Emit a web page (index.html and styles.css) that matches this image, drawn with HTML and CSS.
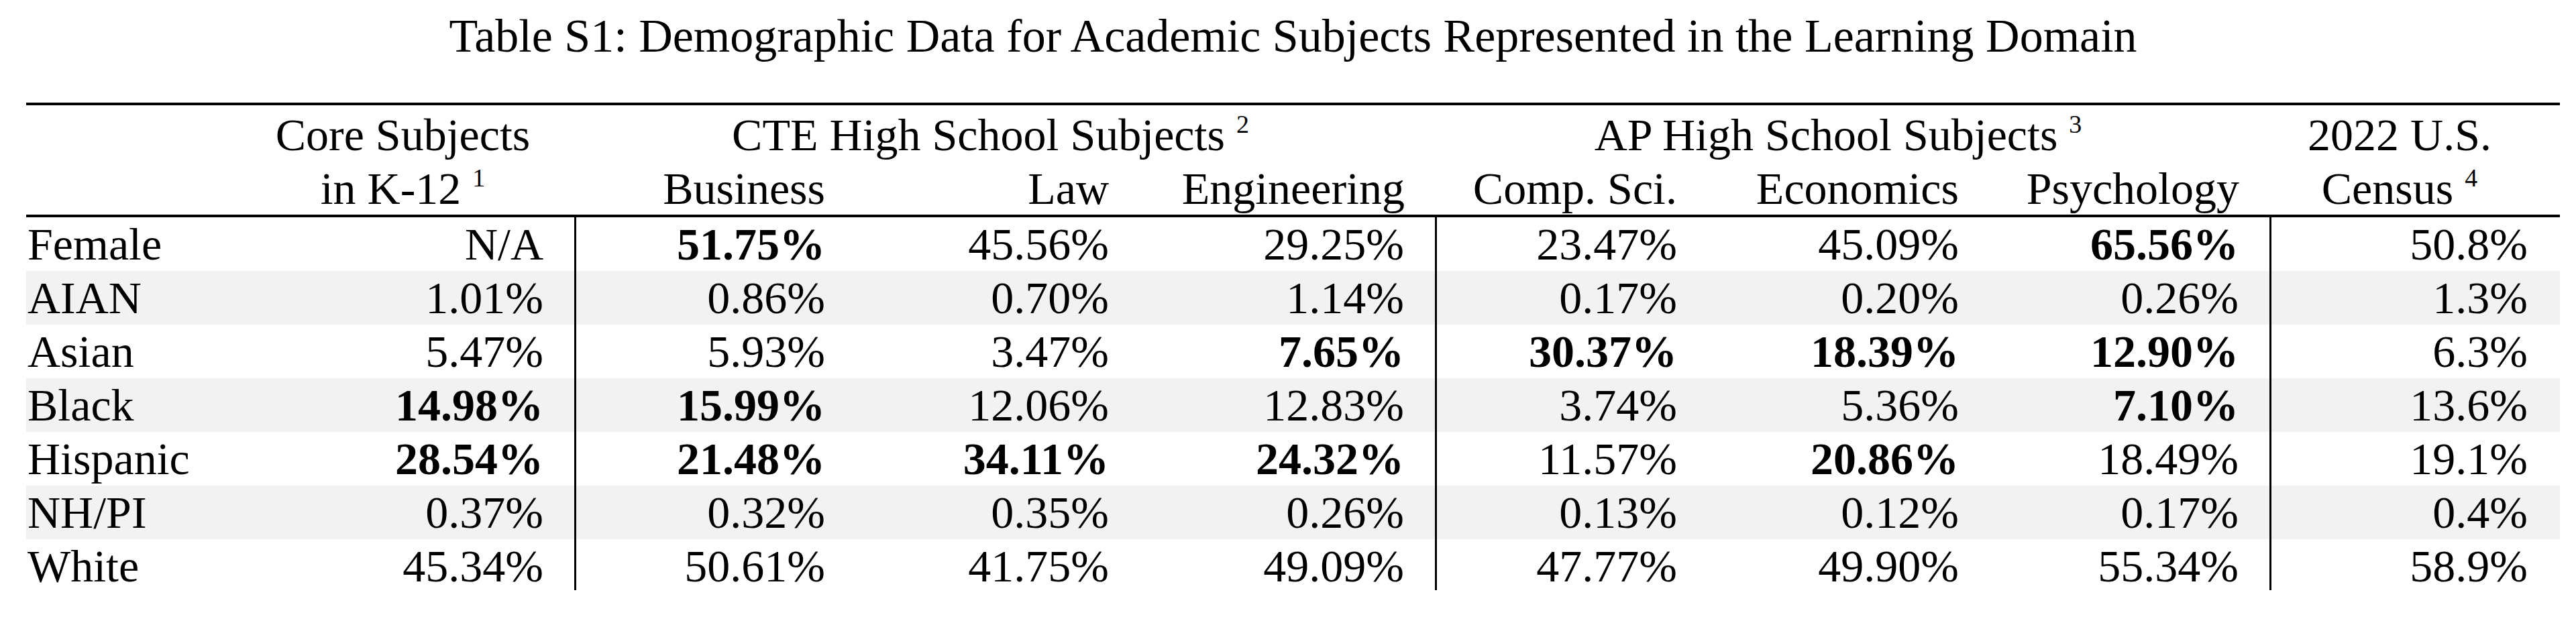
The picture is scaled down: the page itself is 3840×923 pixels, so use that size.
FILE: index.html
```html
<!DOCTYPE html>
<html lang="en">
<head>
<meta charset="utf-8">
<title>Table S1</title>
<link rel="stylesheet" href="styles.css">
</head>
<body>
<div class="page">
  <h1 class="caption">Table S1: Demographic Data for Academic Subjects Represented in the Learning Domain</h1>
  <div class="table">
    <div class="head">
      <div class="hrow hrow-top">
        <div class="cell"></div>
        <div class="cell center">Core Subjects</div>
        <div class="cell center span3">CTE High School Subjects <sup class="note">2</sup></div>
        <div class="cell center span3">AP High School Subjects <sup class="note">3</sup></div>
        <div class="cell center">2022 U.S.</div>
      </div>
      <div class="hrow hrow-sub">
        <div class="cell"></div>
        <div class="cell center">in K-12 <sup class="note">1</sup></div>
        <div class="cell">Business</div>
        <div class="cell">Law</div>
        <div class="cell">Engineering</div>
        <div class="cell">Comp. Sci.</div>
        <div class="cell">Economics</div>
        <div class="cell">Psychology</div>
        <div class="cell center">Census <sup class="note">4</sup></div>
      </div>
    </div>
    <div class="body">
      <div class="row">
        <div class="cell label">Female</div>
        <div class="cell sep">N/A</div>
        <div class="cell strong">51.75%</div>
        <div class="cell">45.56%</div>
        <div class="cell sep">29.25%</div>
        <div class="cell">23.47%</div>
        <div class="cell">45.09%</div>
        <div class="cell sep strong">65.56%</div>
        <div class="cell">50.8%</div>
      </div>
      <div class="row shade">
        <div class="cell label">AIAN</div>
        <div class="cell sep">1.01%</div>
        <div class="cell">0.86%</div>
        <div class="cell">0.70%</div>
        <div class="cell sep">1.14%</div>
        <div class="cell">0.17%</div>
        <div class="cell">0.20%</div>
        <div class="cell sep">0.26%</div>
        <div class="cell">1.3%</div>
      </div>
      <div class="row">
        <div class="cell label">Asian</div>
        <div class="cell sep">5.47%</div>
        <div class="cell">5.93%</div>
        <div class="cell">3.47%</div>
        <div class="cell sep strong">7.65%</div>
        <div class="cell strong">30.37%</div>
        <div class="cell strong">18.39%</div>
        <div class="cell sep strong">12.90%</div>
        <div class="cell">6.3%</div>
      </div>
      <div class="row shade">
        <div class="cell label">Black</div>
        <div class="cell sep strong">14.98%</div>
        <div class="cell strong">15.99%</div>
        <div class="cell">12.06%</div>
        <div class="cell sep">12.83%</div>
        <div class="cell">3.74%</div>
        <div class="cell">5.36%</div>
        <div class="cell sep strong">7.10%</div>
        <div class="cell">13.6%</div>
      </div>
      <div class="row">
        <div class="cell label">Hispanic</div>
        <div class="cell sep strong">28.54%</div>
        <div class="cell strong">21.48%</div>
        <div class="cell strong">34.11%</div>
        <div class="cell sep strong">24.32%</div>
        <div class="cell">11.57%</div>
        <div class="cell strong">20.86%</div>
        <div class="cell sep">18.49%</div>
        <div class="cell">19.1%</div>
      </div>
      <div class="row shade">
        <div class="cell label">NH/PI</div>
        <div class="cell sep">0.37%</div>
        <div class="cell">0.32%</div>
        <div class="cell">0.35%</div>
        <div class="cell sep">0.26%</div>
        <div class="cell">0.13%</div>
        <div class="cell">0.12%</div>
        <div class="cell sep">0.17%</div>
        <div class="cell">0.4%</div>
      </div>
      <div class="row last">
        <div class="cell label">White</div>
        <div class="cell sep">45.34%</div>
        <div class="cell">50.61%</div>
        <div class="cell">41.75%</div>
        <div class="cell sep">49.09%</div>
        <div class="cell">47.77%</div>
        <div class="cell">49.90%</div>
        <div class="cell sep">55.34%</div>
        <div class="cell">58.9%</div>
      </div>
    </div>
  </div>
</div>
</body>
</html>
```
FILE: styles.css
```css
html, body {
  margin: 0;
  padding: 0;
  background: #ffffff;
}

body {
  font-family: "Liberation Serif", "Times New Roman", serif;
  color: #000000;
}

.page {
  width: 3777px;
  margin-left: 39px;
}

.caption {
  font-size: 70px;
  font-weight: normal;
  line-height: 80px;
  margin: 14px 0 0 0;
  text-align: center;
}

.table {
  margin-top: 59px;
  font-size: 68px;
  line-height: 80px;
}

.head {
  border-top: 4px solid #000000;
  border-bottom: 4px solid #000000;
}

.hrow,
.row {
  display: grid;
  grid-template-columns: 351px 469px 419px 423px 441px 406px 420px 418px 430px;
}

.hrow-top {
  padding-top: 4px;
}

.hrow-sub {
  height: 79px;
}

.row {
  grid-template-rows: 80px;
}

.row.last {
  grid-template-rows: 76px;
}

.row.shade {
  background: #f2f2f2;
}

.cell {
  text-align: right;
  padding-right: 48px;
  white-space: nowrap;
}

.cell.label {
  text-align: left;
  padding-left: 2px;
  padding-right: 0;
}

.cell.center {
  text-align: center;
}

.span3 {
  grid-column: span 3;
}

.row .sep {
  border-right: 3px solid #000000;
  padding-right: 46px;
}

.strong {
  font-weight: bold;
}

.note {
  font-size: 38px;
  line-height: 0;
  vertical-align: 26px;
}
```
